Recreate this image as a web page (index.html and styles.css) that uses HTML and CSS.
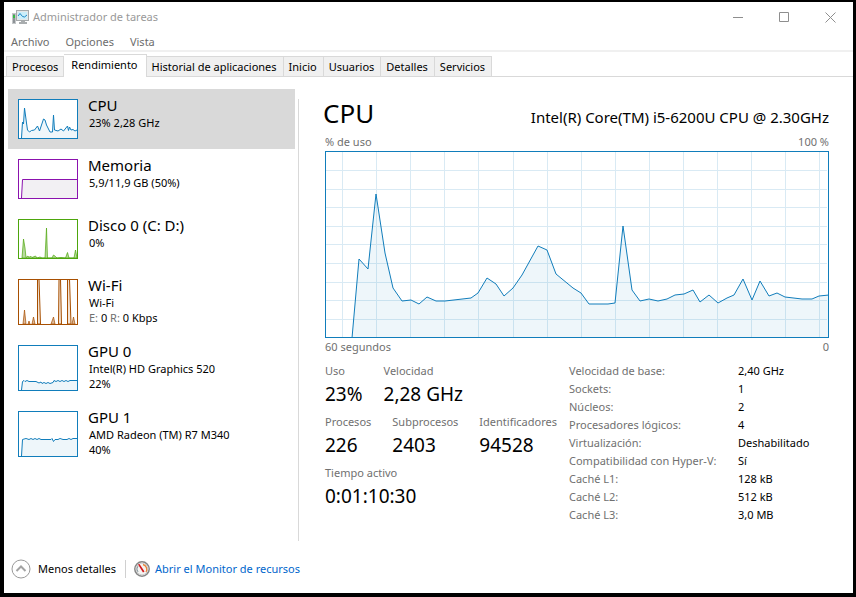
FILE: index.html
```html
<!DOCTYPE html>
<html lang="es">
<head>
	<meta charset="UTF-8">
	<title>Administrador de tareas</title>
	<link rel="stylesheet" href="styles.css">
</head>
<body>
	<div class="window">
		<header class="titlebar">
			<svg class="app-icon" width="17" height="16" viewBox="0 0 17 16">
				<rect x="0.5" y="4.5" width="3" height="10" fill="#8d9296" stroke="#c4c7c9"/>
				<rect x="1" y="6" width="2" height="3" fill="#35b944"/>
				<rect x="4.5" y="1.5" width="12" height="10" fill="#e4e7e8" stroke="#a5a9ab"/>
				<rect x="6" y="3" width="9" height="7" fill="#c9eefb"/>
				<path d="M6 7L8 4.500L10.500 7.500L12.500 8L15 6" fill="none" stroke="#1e86c4"/>
				<path d="M9 12h4v1h2v2H7v-2h2z" fill="#a9adaf"/>
			</svg>
			<h1 class="title">Administrador de tareas</h1>
			<div class="window-buttons">
				<button type="button" aria-label="Minimizar"><svg width="11" height="11" viewBox="0 0 11 11"><path d="M0 5.500H10"/></svg></button>
				<button type="button" aria-label="Maximizar"><svg width="11" height="11" viewBox="0 0 11 11"><path d="M0.500 0.500H9.500V9.500H0.500Z"/></svg></button>
				<button type="button" aria-label="Cerrar"><svg width="11" height="11" viewBox="0 0 11 11"><path d="M0.500 0.500L10.500 10.500M10.500 0.500L0.500 10.500"/></svg></button>
			</div>
		</header>
		<nav class="menu">
			<button type="button">Archivo</button>
			<button type="button">Opciones</button>
			<button type="button">Vista</button>
		</nav>
		<div class="tabs" role="tablist">
			<button type="button" class="tab" role="tab">Procesos</button>
			<button type="button" class="tab active" role="tab" aria-selected="true">Rendimiento</button>
			<button type="button" class="tab" role="tab">Historial de aplicaciones</button>
			<button type="button" class="tab" role="tab">Inicio</button>
			<button type="button" class="tab" role="tab">Usuarios</button>
			<button type="button" class="tab" role="tab">Detalles</button>
			<button type="button" class="tab" role="tab">Servicios</button>
		</div>
		<div class="content">
			<aside class="sidebar">
				<button type="button" class="item selected">
					<svg class="thumb blue" viewBox="1 1 58 38">
						<path class="area" d="M3.500 39L4.500 23L5.500 25L6.500 9L8.500 24L9.500 31L11.500 33L13.500 31.500L16.500 31L19.500 27L21.500 32L25.500 20L27 21L28.500 26L32 33H34.500L35.500 16L36.500 31L40 32L43 30L45.500 32L49.500 27L50.500 31.500L51.500 28L53 31L55 30.500L57 32L59 31V39Z"/>
						<path class="line" d="M3.500 39L4.500 23L5.500 25L6.500 9L8.500 24L9.500 31L11.500 33L13.500 31.500L16.500 31L19.500 27L21.500 32L25.500 20L27 21L28.500 26L32 33H34.500L35.500 16L36.500 31L40 32L43 30L45.500 32L49.500 27L50.500 31.500L51.500 28L53 31L55 30.500L57 32L59 31"/>
					</svg>
					<span class="info">
						<span class="name">CPU</span>
						<span class="detail">23% 2,28 GHz</span>
					</span>
				</button>
				<button type="button" class="item">
					<svg class="thumb purple" viewBox="1 1 58 38">
						<path class="area" d="M3.500 39L4.500 20.500H60V39Z"/>
						<path class="line" d="M3.500 39L4.500 20.500H60"/>
					</svg>
					<span class="info">
						<span class="name">Memoria</span>
						<span class="detail">5,9/11,9 GB (50%)</span>
					</span>
				</button>
				<button type="button" class="item">
					<svg class="thumb green" viewBox="1 1 58 38">
						<path class="spike" d="M4 39L5.500 20L7 29L8 38.500L10 37L11 38.500L12.500 37L14 38.500L17.500 37L19 39L22 38L24 39H27L28.500 9L29.500 39H34L35.500 36L37.500 37.500L39 39L43 38.500L47.500 39L49.500 33.500L51 39H56L57.500 31L59 39Z"/>
					</svg>
					<span class="info">
						<span class="name">Disco 0 (C: D:)</span>
						<span class="detail">0%</span>
					</span>
				</button>
				<button type="button" class="item tall">
					<svg class="thumb orange" viewBox="1 1 58 44">
						<path class="spike" d="M5 45L6.500 31L8 45ZM10 45L11 42L12 45ZM14 45L15.500 38L17 45ZM33 45L35.500 38L37 45ZM54 45L55.500 38L57 45Z"/>
						<path class="burst" d="M19.500 45V0H21L22.500 45ZM40.500 45L41 0H42.500L43.500 45ZM49.500 45V0H51.500L53 45Z"/>
					</svg>
					<span class="info">
						<span class="name">Wi-Fi</span>
						<span class="detail">Wi-Fi</span>
						<span class="detail"><span class="muted">E:</span> 0 <span class="muted">R:</span> 0 Kbps</span>
					</span>
				</button>
				<button type="button" class="item tall">
					<svg class="thumb blue" viewBox="1 1 58 44">
						<path class="area" d="M3.500 45L4.500 36L18 36.500L21 38L26 38.500L34 38L36 36L42 36.500L52 36L60 35.500V45Z"/>
						<path class="line" d="M3.500 45L4.500 36.500L6 35.500L7 36.500L9 35.500L11 36.500H18L21 38L23 37L24 38.500L26 37.500L28 38.500L30 37.500L32 38.500L35 37.500L36 35.500L38 36.500L40 35.500L42 36.500L44 35.500L46 36.500L48 35.500L50 36.500L52 35.500H60"/>
					</svg>
					<span class="info">
						<span class="name">GPU 0</span>
						<span class="detail">Intel(R) HD Graphics 520</span>
						<span class="detail">22%</span>
					</span>
				</button>
				<button type="button" class="item tall">
					<svg class="thumb blue" viewBox="1 1 58 44">
						<path class="area" d="M3.500 45L4.500 29L12 28L34 28L35.500 31L37 29L60 28V45Z"/>
						<path class="line" d="M3.500 45L4.500 28.500L8 27.500L11 28.500L13 27.500L15 28.500L17 27.500L19 28.500L21 27.500L23 28.500L33 28.500L34 27.500L35.500 30.500L37 28.500H40L42 27.500L45 28.500H49L51 27.500L53 28.500L55 27.500H60"/>
					</svg>
					<span class="info">
						<span class="name">GPU 1</span>
						<span class="detail">AMD Radeon (TM) R7 M340</span>
						<span class="detail">40%</span>
					</span>
				</button>
			</aside>
			<main class="panel">
				<div class="heading">
					<h2>CPU</h2>
					<p>Intel(R) Core(TM) i5-6200U CPU @ 2.30GHz</p>
				</div>
				<div class="scale"><span>% de uso</span><span>100 %</span></div>
				<svg class="chart blue" viewBox="1 1 502 185" preserveAspectRatio="none">
					<path class="grid" d="M17.500 0V187M51.500 0V187M85.500 0V187M119.500 0V187M153.500 0V187M188.500 0V187M222.500 0V187M256.500 0V187M290.500 0V187M324.500 0V187M358.500 0V187M392.500 0V187M426.500 0V187M460.500 0V187M494.500 0V187M0 19.500H502M0 38.500H502M0 56.500H502M0 75.500H502M0 93.500H502M0 112.500H502M0 131.500H502M0 149.500H502M0 168.500H502"/>
					<path class="area" d="M27 187L34 108L43 118L51 43L60 102L68 137L77 150L86 149L94 153L102 146L111 150L120 150L146 147L153 142L162 127L171 133L179 145L188 137L197 124L213 95L222 99L231 123L248 137L256 142L264 153L283 153L290 152L298 75L307 139L315 150L324 148L333 150L342 148L350 144L359 143L368 139L375 151L384 144L393 152L402 147L409 144L418 128L427 149L435 130L444 145L452 142L460 146L477 148L487 148L494 145L504 144V187Z"/>
					<path class="line" d="M27 187L34 108L43 118L51 43L60 102L68 137L77 150L86 149L94 153L102 146L111 150L120 150L146 147L153 142L162 127L171 133L179 145L188 137L197 124L213 95L222 99L231 123L248 137L256 142L264 153L283 153L290 152L298 75L307 139L315 150L324 148L333 150L342 148L350 144L359 143L368 139L375 151L384 144L393 152L402 147L409 144L418 128L427 149L435 130L444 145L452 142L460 146L477 148L487 148L494 145L504 144"/>
				</svg>
				<div class="scale"><span>60 segundos</span><span>0</span></div>
				<div class="stats">
					<div class="counters">
						<dl>
							<div><dt>Uso</dt><dd>23%</dd></div>
							<div><dt>Velocidad</dt><dd>2,28 GHz</dd></div>
						</dl>
						<dl>
							<div><dt>Procesos</dt><dd>226</dd></div>
							<div><dt>Subprocesos</dt><dd>2403</dd></div>
							<div><dt>Identificadores</dt><dd>94528</dd></div>
						</dl>
						<dl>
							<div><dt>Tiempo activo</dt><dd>0:01:10:30</dd></div>
						</dl>
					</div>
					<table class="specs">
						<tr><th scope="row">Velocidad de base:</th><td>2,40 GHz</td></tr>
						<tr><th scope="row">Sockets:</th><td>1</td></tr>
						<tr><th scope="row">Núcleos:</th><td>2</td></tr>
						<tr><th scope="row">Procesadores lógicos:</th><td>4</td></tr>
						<tr><th scope="row">Virtualización:</th><td>Deshabilitado</td></tr>
						<tr><th scope="row">Compatibilidad con Hyper-V:</th><td>Sí</td></tr>
						<tr><th scope="row">Caché L1:</th><td>128 kB</td></tr>
						<tr><th scope="row">Caché L2:</th><td>512 kB</td></tr>
						<tr><th scope="row">Caché L3:</th><td>3,0 MB</td></tr>
					</table>
				</div>
			</main>
		</div>
		<footer class="footer">
			<button type="button" class="less">
				<svg width="20" height="20" viewBox="0 0 20 20" fill="none">
					<circle cx="10" cy="10" r="9" stroke="#9a9a9a"/>
					<path d="M5.500 12L10 7.500L14.500 12" stroke="#a3a3a3" stroke-width="2"/>
				</svg>
				Menos detalles
			</button>
			<a href="#" class="monitor">
				<svg width="16" height="16" viewBox="0 0 16 16" fill="none">
					<circle cx="8" cy="8" r="7.200" fill="#f4f4f2" stroke="#858585" stroke-width="1.500"/>
					<circle cx="8" cy="8" r="5.800" stroke="#cfcfcf"/>
					<path d="M4 11A5 5 0 0 1 4 5" stroke="#8b9aa0"/>
					<path d="M9 3.500A5 5 0 0 1 12 11" stroke="#e8853a" stroke-width="1.300"/>
					<path d="M4 3.500L5.500 3L10.500 10.500L9 11.500Z" fill="#d3161b"/>
				</svg>
				Abrir el Monitor de recursos
			</a>
		</footer>
	</div>
</body>
</html>
```

FILE: styles.css
```css
*{
	box-sizing: border-box;
}
body{
	margin: 0;
	background: #000;
	color: #000;
	font: 11px/18px "Noto Sans", "Open Sans", sans-serif;
}
h1, h2, p, dl, dd{
	margin: 0;
	font-weight: normal;
}
button{
	padding: 0;
	border: 0;
	background: none;
	color: inherit;
	font: inherit;
	text-align: left;
}
svg{
	display: block;
	flex: none;
}
.window{
	display: flex;
	flex-direction: column;
	min-height: 100vh;
	border: solid #000;
	border-width: 2px 3px 4px 4px;
	background: #fff;
}

/* title bar and menu */
.titlebar{
	display: flex;
	align-items: center;
	height: 30px;
	padding-left: 8px;
	gap: 4px;
}
.title{
	flex: 1;
	color: #999;
	font-size: 11px;
}
.window-buttons{
	display: flex;
}
.window-buttons button{
	display: flex;
	align-items: center;
	justify-content: center;
	width: 46px;
	height: 29px;
}
.window-buttons path{
	fill: none;
	stroke: #8e8e8e;
}
.menu{
	display: flex;
	gap: 16px;
	height: 20px;
	padding: 2px 0 0 7px;
	border-bottom: 2px solid #f0f0f0;
	color: #6d6d6d;
	line-height: 16px;
}

/* tabs */
.tabs{
	display: flex;
	align-items: flex-end;
	height: 25px;
	padding-left: 2px;
	border-bottom: 1px solid #d9d9d9;
}
.tab{
	height: 20px;
	padding: 0 6px 0 5px;
	border: solid #d9d9d9;
	border-width: 1px 1px 0 0;
	background: #f0f0f0;
}
.tab:first-child{
	padding-right: 5px;
	border-left-width: 1px;
}
.tab.active{
	height: 23px;
	margin-bottom: -1px;
	padding: 0 8px 2px 7px;
	background: #fff;
}

/* resource list */
.content{
	display: flex;
	flex: 1;
}
.sidebar{
	width: 291px;
	padding: 12px 0 0 4px;
}
.item{
	display: flex;
	width: 100%;
	height: 60px;
	padding: 6px 10px;
	gap: 10px;
}
.item.tall{
	height: 66px;
}
.item.selected{
	background: #d9d9d9;
}
.thumb{
	width: 60px;
	height: 40px;
	margin-top: 4px;
	border: 1px solid;
	background: #fff;
}
.tall .thumb{
	height: 46px;
}
.blue{
	color: #117dbb;
}
.purple{
	color: #8b12ae;
}
.green{
	color: #4da60c;
}
.orange{
	color: #a74f01;
}
.info, .name, .detail{
	display: block;
}
.name{
	font-size: 15px;
	line-height: 20px;
}
.detail{
	padding-left: 1px;
	line-height: 15px;
}
.muted{
	color: #707070;
}
.line{
	fill: none;
	stroke: currentColor;
	vector-effect: non-scaling-stroke;
}
.area{
	fill: #117dbb;
	fill-opacity: 0.07;
}
.purple .area{
	fill: #4a2a5a;
}
.spike{
	fill: currentColor;
	fill-opacity: 0.4;
	stroke: currentColor;
	stroke-width: 0.7px;
}
.burst{
	fill: #f3e4d6;
	stroke: currentColor;
}

/* cpu panel */
.panel{
	flex: 1;
	min-width: 0;
	margin-top: 22px;
	margin-left: 3px;
	padding: 0 24px 0 26px;
	border-left: 1px solid #d9d9d9;
}
.heading{
	display: flex;
	align-items: baseline;
	justify-content: space-between;
	margin-top: -6px;
	margin-left: -2px;
}
.heading h2{
	font-size: 26px;
	line-height: 40px;
}
.heading p{
	font-size: 15px;
}
.scale{
	display: flex;
	justify-content: space-between;
	color: #707070;
}
.chart{
	width: 100%;
	height: 187px;
	border: 1px solid #117dbb;
}
.grid{
	fill: none;
	stroke: #d9eaf4;
	vector-effect: non-scaling-stroke;
}
.stats{
	display: flex;
	margin-top: 6px;
}
.counters{
	width: 244px;
}
.counters dl{
	display: flex;
	gap: 21px;
	margin-bottom: 5px;
	white-space: nowrap;
}
dt{
	color: #707070;
}
dd{
	font-size: 19px;
	line-height: 28px;
}
.specs{
	align-self: flex-start;
	border-collapse: collapse;
}
.specs th, .specs td{
	padding: 0;
	font-weight: normal;
	text-align: left;
}
.specs th{
	width: 169px;
	color: #707070;
}

/* bottom bar */
.footer{
	display: flex;
	align-items: center;
	height: 52px;
	padding: 4px 0 0 7px;
}
.less, .monitor{
	display: flex;
	align-items: center;
}
.less{
	gap: 7px;
	padding-right: 9px;
}
.monitor{
	gap: 5px;
	padding-left: 8px;
	border-left: 1px solid #d0d0d0;
	color: #0066cc;
	text-decoration: none;
}
```
